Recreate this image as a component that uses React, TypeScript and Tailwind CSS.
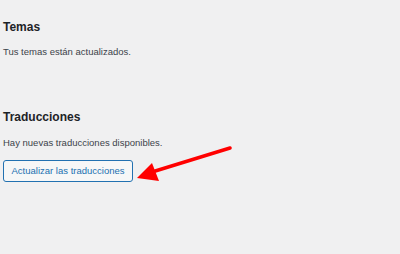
export default function App() {
  return (
    <div
      className="relative h-[254px] w-[400px] overflow-hidden bg-[#f0f0f1] px-[3px] text-[#1d2327]"
      style={{ fontFamily: '"Liberation Sans", Arial, sans-serif' }}
    >
      <section className="pt-[19px]">
        <h2 className="text-[12px] font-semibold leading-[16px]">Temas</h2>
        <p className="mt-[10px] text-[9.5px] leading-[13px] text-[#3c434a]">Tus temas están actualizados.</p>
      </section>

      <section className="pt-[51px]">
        <h2 className="text-[12px] font-semibold leading-[16px]">Traducciones</h2>
        <p className="mt-[11px] text-[9.5px] leading-[13px] text-[#3c434a]">Hay nuevas traducciones disponibles.</p>
        <button className="mt-[11px] h-[22px] w-[130px] rounded-[3px] border border-[#2271b1] bg-[#f6f7f7] text-[9.5px] text-[#2271b1]">
          Actualizar las traducciones
        </button>
      </section>

      {/* red arrow overlay */}
      <svg className="absolute left-0 top-0" width="400" height="254" viewBox="0 0 400 254">
        <line x1="230" y1="148" x2="152" y2="172" stroke="#f00" strokeWidth="3.5" strokeLinecap="round" />
        <polygon points="137,178 152,163 159,181" fill="#f00" />
      </svg>
    </div>
  )
}
